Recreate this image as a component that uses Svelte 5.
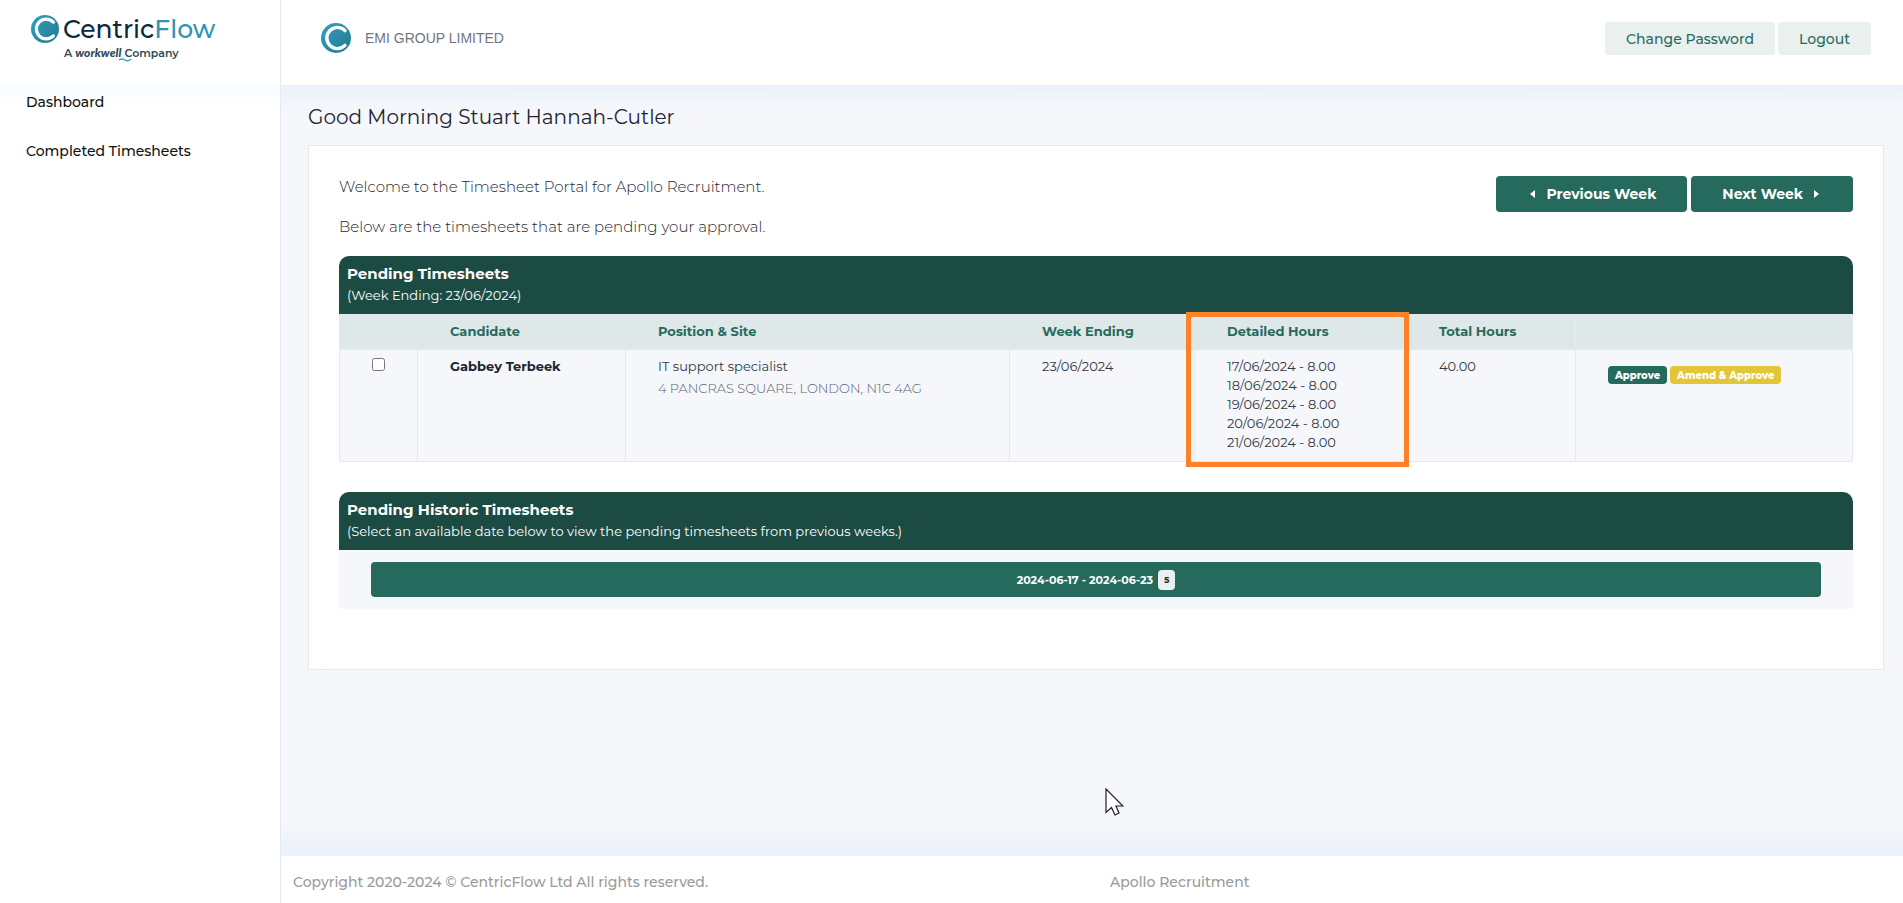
<script>
    const menu = ['Dashboard', 'Completed Timesheets'];

    const weekEnding = '23/06/2024';

    let timesheets = [
        {
            candidate: 'Gabbey Terbeek',
            position: 'IT support specialist',
            site: '4 PANCRAS SQUARE, LONDON, N1C 4AG',
            weekEnding: '23/06/2024',
            hours: [
                '17/06/2024 - 8.00',
                '18/06/2024 - 8.00',
                '19/06/2024 - 8.00',
                '20/06/2024 - 8.00',
                '21/06/2024 - 8.00',
            ],
            total: '40.00',
            selected: false,
        },
    ];

    const historic = [{ range: '2024-06-17 - 2024-06-23', count: 5 }];
</script>

{#snippet mark()}
    <svg class="mark" viewBox="0 0 30 30" aria-hidden="true">
        <defs>
            <linearGradient id="markFill" x1="0" y1="0" x2="1" y2="1">
                <stop offset="0" stop-color="#2fa3c4" />
                <stop offset="1" stop-color="#23788f" />
            </linearGradient>
        </defs>
        <circle cx="15" cy="15" r="15" fill="url(#markFill)" />
        <path d="M8 12Q12 9 16 11T27 9L27 15Q20 17 16 14T8 12Z" fill="#3d819b" opacity="0.6" />
        <path d="M24 7.600A10.600 10.600 0 1 0 24 22.400" fill="none" stroke="#fff" stroke-width="3.4" stroke-linecap="round" />
    </svg>
{/snippet}

<div class="page">
    <header class="topbar">
        <a class="brand" href="#home">
            <span class="brandRow">
                {@render mark()}
                <span class="brandName">Centric<span class="flow">Flow</span></span>
            </span>
            <span class="tagline">A <i>workwell</i> Company
                <svg class="swoosh" viewBox="0 0 14 4" aria-hidden="true">
                    <path d="M1 2Q4 0 7 2T13 1" fill="none" stroke="#36a3c2" stroke-width="1.4" />
                </svg>
            </span>
        </a>
        <div class="account">
            <div class="company">
                {@render mark()}
                <span>EMI GROUP LIMITED</span>
            </div>
            <div class="accountButtons">
                <button class="lightButton">Change Password</button>
                <button class="lightButton">Logout</button>
            </div>
        </div>
    </header>

    <nav class="sidebar">
        {#each menu as item}
            <a href="#{item.toLowerCase().replace(' ', '-')}">{item}</a>
        {/each}
    </nav>

    <main class="content">
        <h1>Good Morning Stuart Hannah-Cutler</h1>

        <section class="card">
            <div class="intro">
                <div>
                    <p>Welcome to the Timesheet Portal for Apollo Recruitment.</p>
                    <p>Below are the timesheets that are pending your approval.</p>
                </div>
                <div class="weekButtons">
                    <button class="weekButton">
                        <svg class="caret" viewBox="0 0 5 8" aria-hidden="true"><path d="M5 0v8L0 4z" /></svg>
                        Previous Week
                    </button>
                    <button class="weekButton">
                        Next Week
                        <svg class="caret" viewBox="0 0 5 8" aria-hidden="true"><path d="M0 0v8l5-4z" /></svg>
                    </button>
                </div>
            </div>

            <div class="panelHead">
                <h2>Pending Timesheets</h2>
                <span>(Week Ending: {weekEnding})</span>
            </div>
            <table>
                <colgroup>
                    <col class="colCheck" />
                    <col class="colCandidate" />
                    <col />
                    <col class="colWeek" />
                    <col class="colHours" />
                    <col class="colTotal" />
                    <col class="colActions" />
                </colgroup>
                <thead>
                    <tr>
                        <th></th>
                        <th>Candidate</th>
                        <th>Position &amp; Site</th>
                        <th>Week Ending</th>
                        <th class="highlighted">Detailed Hours<span class="highlight"></span></th>
                        <th>Total Hours</th>
                        <th></th>
                    </tr>
                </thead>
                <tbody>
                    {#each timesheets as sheet}
                        <tr>
                            <td><input type="checkbox" aria-label="Select {sheet.candidate}" bind:checked={sheet.selected} /></td>
                            <td class="candidate">{sheet.candidate}</td>
                            <td>{sheet.position}<div class="site">{sheet.site}</div></td>
                            <td>{sheet.weekEnding}</td>
                            <td>
                                {#each sheet.hours as line}
                                    <div>{line}</div>
                                {/each}
                            </td>
                            <td>{sheet.total}</td>
                            <td>
                                <div class="actions">
                                    <button class="tag">Approve</button>
                                    <button class="tag amend">Amend &amp; Approve</button>
                                </div>
                            </td>
                        </tr>
                    {/each}
                </tbody>
            </table>

            <div class="panelHead historicHead">
                <h2>Pending Historic Timesheets</h2>
                <span>(Select an available date below to view the pending timesheets from previous weeks.)</span>
            </div>
            <div class="historic">
                {#each historic as week}
                    <button class="historicButton">{week.range} <span class="count">{week.count}</span></button>
                {/each}
            </div>
        </section>

        <svg class="cursor" viewBox="0 0 19 28" aria-hidden="true">
            <path d="M1 1V24.500L6.500 19.500L10 27L14 25L11 18H18Z" fill="#fff" stroke="#1b1b2b" stroke-width="1.2" />
        </svg>
    </main>

    <footer class="footer">
        <span>Copyright 2020-2024 © CentricFlow Ltd All rights reserved.</span>
        <span>Apollo Recruitment</span>
    </footer>
</div>

<style>
    :global(body) {
        margin: 0;
        background: #f5f7fb;
        font-family: Montserrat, Inter, "Open Sans", sans-serif;
        color: #1f2a37;
    }

    .page {
        display: grid;
        grid-template-columns: 281px 1fr;
        grid-template-rows: 85px 1fr auto;
        min-height: 100vh;
    }

    a {
        color: inherit;
        text-decoration: none;
    }

    button {
        border: 0;
        font-family: inherit;
        cursor: pointer;
    }

    .topbar {
        grid-column: 1 / -1;
        display: grid;
        grid-template-columns: 280px 1fr;
        background: #fff;
    }

    .brand {
        padding: 14px 0 0 31px;
    }

    .brandRow {
        display: flex;
        align-items: center;
        gap: 4px;
        height: 30px;
    }

    .mark {
        display: block;
        flex: none;
        width: 28px;
        height: 28px;
    }

    .brandName {
        font-size: 25px;
        font-weight: 500;
        line-height: 30px;
        color: #0b2a3c;
    }

    .flow {
        color: #2f93b2;
    }

    .tagline {
        position: relative;
        display: block;
        width: max-content;
        margin-left: 33px;
        font-size: 11px;
        font-weight: 600;
        line-height: 18px;
        color: #2c4a58;
    }

    .tagline i {
        font-family: Lato, sans-serif;
        font-size: 12px;
        font-weight: 900;
    }

    .swoosh {
        position: absolute;
        left: 54px;
        top: 14px;
        width: 14px;
        height: 4px;
    }

    .account {
        display: flex;
        justify-content: space-between;
        padding: 22px 32px 0 40px;
        border-left: 1px solid #e4ebef;
    }

    .company {
        display: flex;
        align-items: center;
        gap: 14px;
        height: 31px;
        font-family: "Liberation Sans", Arial, sans-serif;
        font-size: 14px;
        color: #6f7680;
    }

    .company .mark {
        width: 30px;
        height: 30px;
    }

    .accountButtons {
        display: flex;
        gap: 3px;
    }

    .lightButton {
        height: 33px;
        padding: 0 21px;
        border-radius: 4px;
        background: #e9f0ee;
        color: #276b5d;
        font-size: 14px;
        font-weight: 500;
    }

    .sidebar {
        display: flex;
        flex-direction: column;
        grid-row: 2 / 4;
        gap: 29px;
        padding: 7px 26px;
        border-right: 1px solid #e4ebef;
        background: linear-gradient(#f7fbff, #fff 22px);
        font-size: 14px;
        font-weight: 500;
        line-height: 20px;
        color: #111;
    }

    .content {
        position: relative;
        padding: 17px 19px 40px 27px;
        background: linear-gradient(#ebf1fa, rgb(235 241 250 / 0) 24px), linear-gradient(to top, #e9f1fb, #f5f7fb 30px);
    }

    h1 {
        margin: 0 0 13px;
        font-size: 20px;
        font-weight: 400;
        line-height: 30px;
        color: #1d2530;
    }

    .card {
        padding: 30px 30px 60px;
        border: 1px solid #e4ebef;
        background: #fff;
    }

    .intro {
        display: flex;
        justify-content: space-between;
        align-items: flex-start;
    }

    p {
        margin: 0 0 18px;
        font-size: 15px;
        font-weight: 300;
        line-height: 22px;
        color: #1d2530;
    }

    .weekButtons {
        display: flex;
        gap: 4px;
    }

    .weekButton {
        display: flex;
        align-items: center;
        gap: 11px;
        height: 36px;
        padding: 0 31px 0 34px;
        border-radius: 4px;
        background: #256a5c;
        color: #fff;
        font-size: 14px;
        font-weight: 700;
    }

    .weekButton:last-child {
        padding: 0 34px 0 31px;
    }

    .caret {
        width: 5px;
        height: 8px;
        fill: #fff;
    }

    .panelHead {
        height: 50px;
        padding: 8px 8px 0;
        border-radius: 10px 10px 0 0;
        background: #1b4b43;
        color: #fff;
        font-size: 13px;
        line-height: 22px;
    }

    .historicHead {
        margin-top: 30px;
    }

    h2 {
        margin: 0;
        font-size: 15px;
        font-weight: 700;
        line-height: 20px;
    }

    table {
        width: 100%;
        table-layout: fixed;
        border-collapse: collapse;
        font-size: 13px;
        line-height: 19px;
    }

    .colCheck {
        width: 78px;
    }

    .colCandidate {
        width: 208px;
    }

    .colWeek {
        width: 185px;
    }

    .colHours {
        width: 212px;
    }

    .colTotal {
        width: 169px;
    }

    .colActions {
        width: 277px;
    }

    th {
        padding: 7px 32px 8px;
        border: 1px solid #e4ebef;
        background: #dfe8e8;
        color: #276b5d;
        font-weight: 700;
        text-align: left;
    }

    td {
        padding: 7px 32px 9px;
        border: 1px solid #e4ebef;
        background: #f5f7fb;
        color: #333a45;
        font-weight: 400;
        vertical-align: top;
    }

    td input {
        display: block;
        width: 13px;
        height: 13px;
        margin: 1px 0;
    }

    .candidate {
        color: #1d2530;
        font-weight: 700;
    }

    .site {
        margin-top: 3px;
        color: #5c646f;
        font-weight: 300;
    }

    .highlighted {
        position: relative;
    }

    .highlight {
        position: absolute;
        box-sizing: border-box;
        top: -3px;
        left: -9px;
        right: -3px;
        height: 155px;
        border: 5px solid #ff8127;
    }

    .actions {
        display: flex;
        gap: 3px;
        padding-top: 9px;
    }

    .tag {
        height: 18px;
        padding: 0 7px;
        border-radius: 4px;
        background: #256a5c;
        color: #fff;
        font-size: 10px;
        font-weight: 800;
    }

    .amend {
        background: #e3c637;
    }

    .historic {
        padding: 12px 32px;
        border-radius: 0 0 4px 4px;
        background: #f5f7fb;
    }

    .historicButton {
        display: flex;
        justify-content: center;
        align-items: center;
        gap: 5px;
        width: 100%;
        height: 35px;
        border-radius: 4px;
        background: #256a5c;
        color: #fff;
        font-size: 11px;
        font-weight: 700;
    }

    .count {
        padding: 0 6px;
        border-radius: 4px;
        background: #e9f0ee;
        color: #1d2530;
        font-size: 9px;
        line-height: 20px;
    }

    .cursor {
        position: absolute;
        left: 824px;
        bottom: 40px;
        width: 19px;
        height: 28px;
    }

    .footer {
        display: grid;
        grid-column: 2;
        grid-template-columns: 1fr 1fr;
        gap: 36px;
        padding: 16px 12px 11px;
        background: #fff;
        color: #9a9a9a;
        font-size: 14px;
        font-weight: 500;
        line-height: 20px;
    }
</style>
